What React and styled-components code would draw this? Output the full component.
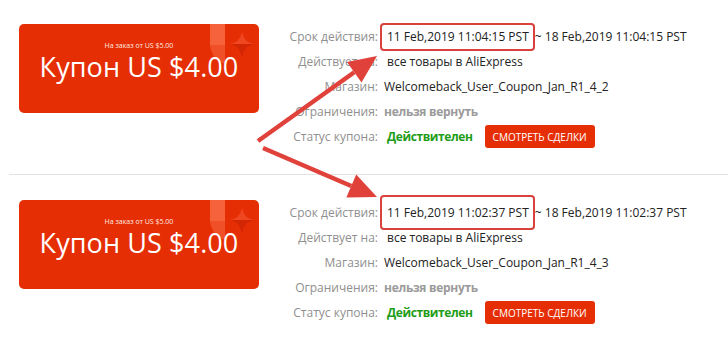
import React from 'react'
import styled, { createGlobalStyle } from 'styled-components'

const GlobalStyle = createGlobalStyle`
  html, body {
    margin: 0;
    padding: 0;
    background: #fff;
  }
  body {
    font-family: "Open Sans", "Liberation Sans", sans-serif;
  }
`

const Page = styled.div`
  position: relative;
  width: 728px;
  height: 347px;
  padding-left: 9px;
  box-sizing: border-box;
  overflow: hidden;
  background: #fff;
`

const CouponBlock = styled.div`
  display: flex;
  align-items: flex-start;
  padding: ${({ $first }) => ($first ? '24px 0 25px 10px' : '25px 0 0 10px')};
  border-bottom: ${({ $first }) => ($first ? '1px solid #e3e3e3' : 'none')};
`

const Card = styled.div`
  position: relative;
  flex: none;
  width: 240px;
  height: 89px;
  border-radius: 5px;
  background: #e62e04;
  color: #fff;
  display: flex;
  flex-direction: column;
  align-items: center;
  padding-top: 17px;
  box-sizing: border-box;
  overflow: hidden;
`

const MinOrder = styled.div`
  font-size: 7px;
  line-height: 9px;
  color: #ffe9e0;
  position: relative;
`

const Amount = styled.div`
  margin-top: 3px;
  font-size: 27px;
  line-height: 28px;
  font-weight: 400;
  letter-spacing: 0.1px;
  position: relative;
`

const Deco = styled.svg`
  position: absolute;
  top: 0;
  left: 190px;
`

const Info = styled.div`
  margin-left: 9px;
  display: grid;
  grid-template-columns: 110px auto;
  grid-auto-rows: 25px;
  column-gap: 6px;
  align-items: center;
  font-size: 12px;
`

const Label = styled.div`
  text-align: right;
  color: #8f8f8f;
  white-space: nowrap;
`

const Value = styled.div`
  display: flex;
  align-items: center;
  white-space: nowrap;
  color: #222;
  padding-left: ${({ $indent }) => ($indent ? '3px' : '0')};
`

const Highlight = styled.span`
  display: inline-block;
  margin: ${({ $tall }) => ($tall ? '-9px 0 -9px -4px' : '-5px 0 -5px -4px')};
  padding: ${({ $tall }) => ($tall ? '7px 4px 6px 5px' : '3px 4px 3px 5px')};
  border: 2px solid #d8413c;
  border-radius: 4px;
  line-height: 18px;
`

const Muted = styled.span`
  font-weight: 700;
  color: #9a9a9a;
  letter-spacing: -0.3px;
`

const Status = styled.span`
  font-weight: 700;
  color: #1f9c17;
  letter-spacing: -0.4px;
`

const DealsButton = styled.button`
  margin-left: 12px;
  height: 23px;
  padding: 0 8px;
  border: none;
  border-radius: 3px;
  background: #e62e04;
  color: #fff;
  font-family: "Open Sans", "Liberation Sans", sans-serif;
  font-size: 10px;
  text-transform: uppercase;
`

const Overlay = styled.svg`
  position: absolute;
  top: 0;
  left: 0;
  pointer-events: none;
`

const CardDeco = () => (
  <Deco width="50" height="45" viewBox="0 0 50 45">
    <path d="M1 0 L16 0 L16 21 L1 21 Z" fill="#f5623c" />
    <path d="M1 21 L16 21 L16 40 Q3 36 1 21 Z" fill="#ef5028" />
    <path d="M33 8 Q35 19 46 20 L20 20 Q31 19 33 8 Z" fill="#ee4722" />
    <path d="M20 20 L46 20 Q35 21 33 34 Q31 21 20 20 Z" fill="#d22605" />
  </Deco>
)

const arrowHead = (tail, tip, len, half) => {
  const dx = tip[0] - tail[0]
  const dy = tip[1] - tail[1]
  const d = Math.hypot(dx, dy)
  const ux = dx / d
  const uy = dy / d
  const bx = tip[0] - ux * len
  const by = tip[1] - uy * len
  return {
    base: [bx, by],
    points: `${tip[0]},${tip[1]} ${bx - uy * half},${by + ux * half} ${bx + uy * half},${by - ux * half}`,
  }
}

const Arrow = ({ tail, tip }) => {
  const head = arrowHead(tail, tip, 28, 12.5)
  return (
    <g fill="#e0413a" stroke="#e0413a">
      <line x1={tail[0]} y1={tail[1]} x2={head.base[0]} y2={head.base[1]} strokeWidth="4.5" />
      <polygon points={head.points} stroke="none" />
    </g>
  )
}

const coupons = [
  { start: '11 Feb,2019 11:04:15 PST', end: '18 Feb,2019 11:04:15 PST', store: 'Welcomeback_User_Coupon_Jan_R1_4_2' },
  { start: '11 Feb,2019 11:02:37 PST', end: '18 Feb,2019 11:02:37 PST', store: 'Welcomeback_User_Coupon_Jan_R1_4_3' },
]

const App = () => {
  return (
    <>
      <GlobalStyle />
      <Page>
        {coupons.map((c, i) => (
          <CouponBlock key={c.store} $first={i === 0}>
            <Card>
              <CardDeco />
              <MinOrder>На заказ от US $5.00</MinOrder>
              <Amount>Купон US $4.00</Amount>
            </Card>
            <Info>
              <Label>Срок действия:</Label>
              <Value>
                <Highlight $tall={i === 1}>{c.start}</Highlight>~ {c.end}
              </Value>
              <Label>Действует на:</Label>
              <Value $indent>все товары в AliExpress</Value>
              <Label>Магазин:</Label>
              <Value>{c.store}</Value>
              <Label>Ограничения:</Label>
              <Value>
                <Muted>нельзя вернуть</Muted>
              </Value>
              <Label>Статус купона:</Label>
              <Value $indent>
                <Status>Действителен</Status>
                <DealsButton>Смотреть сделки</DealsButton>
              </Value>
            </Info>
          </CouponBlock>
        ))}
        <Overlay width="728" height="347" viewBox="0 0 728 347">
          <Arrow tail={[258, 141]} tip={[377, 56]} />
          <Arrow tail={[263, 148]} tip={[377, 197]} />
        </Overlay>
      </Page>
    </>
  )
}

export default App
